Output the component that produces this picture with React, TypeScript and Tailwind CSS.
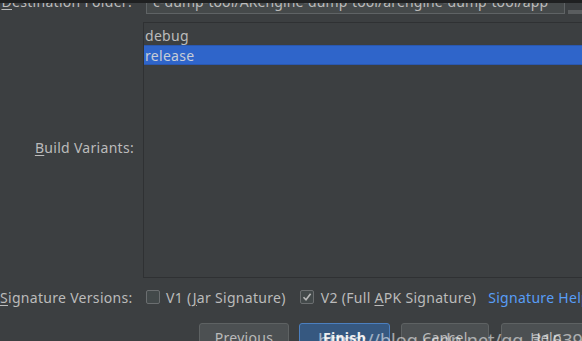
import React from 'react';

const Mn: React.FC<{ c: string }> = ({ c }) => <span className="underline underline-offset-2">{c}</span>;

const Box: React.FC<{ checked?: boolean }> = ({ checked }) => (
  <span className="w-[14px] h-[14px] rounded-[2px] border border-[#6b6e70] bg-[#43494a] flex items-center justify-center shrink-0">
    {checked && (
      <svg width="10" height="10" viewBox="0 0 10 10">
        <path d="M1.5 5.2 L4 7.8 L8.6 1.8" fill="none" stroke="#b8b8b8" strokeWidth="1.6" />
      </svg>
    )}
  </span>
);

const Btn: React.FC<{ label: string; primary?: boolean; className?: string }> = ({ label, primary, className }) => (
  <div
    className={
      'h-[30px] rounded-[3px] border flex items-center justify-center pb-[2px] shrink-0 ' +
      (primary
        ? 'border-[#4b7fbf] bg-[#365880] text-[#eeeeee] font-bold '
        : 'border-[#5e6263] bg-[#4c5052] text-[#bbbbbb] ') +
      (className ?? '')
    }
  >
    {label}
  </div>
);

const App: React.FC = () => {
  return (
    <div
      className="relative w-[582px] h-[341px] overflow-hidden bg-[#3c3f41] text-[#bbbbbb] text-[14px] tracking-[0.3px]"
      style={{ fontFamily: '"Noto Sans", "DejaVu Sans", sans-serif' }}
    >
      {/* destination folder row, clipped at the top */}
      <div className="flex items-center mt-[-12px] h-[26px]">
        <div className="w-[146px] shrink-0 text-right pr-[14px] whitespace-nowrap overflow-hidden">
          <Mn c="D" />estination Folder:
        </div>
        <div className="flex-1 h-[26px] border border-[#5f6365] bg-[#45494a] flex items-center pl-[6px] whitespace-nowrap overflow-hidden tracking-[0.1px]">
          c-dump-tool/ARengine-dump-tool/arengine-dump-tool/app
        </div>
        <div className="w-[14px] h-[4px] ml-[3px] mt-[22px] bg-[#5a5d5f] shrink-0" />
      </div>

      {/* build variants */}
      <div className="flex mt-[8px] h-[256px]">
        <div className="w-[143px] shrink-0 flex items-center justify-end pr-[9px] pb-[5px]">
          <span>
            <Mn c="B" />uild Variants:
          </span>
        </div>
        <div className="flex-1 border-l border-t border-b border-[#2f3133] pt-[2px]">
          <div className="h-[20px] flex items-center pl-[1px]">debug</div>
          <div className="h-[20px] flex items-center pl-[1px] bg-[#2f65ca] border-y border-[#2a58b0] text-[#c8cdd6]">
            release
          </div>
        </div>
      </div>

      {/* signature versions */}
      <div className="flex items-center mt-[9px] h-[20px] whitespace-nowrap">
        <div className="w-[146px] shrink-0 text-right pr-[15px]">
          <Mn c="S" />ignature Versions:
        </div>
        <Box />
        <span className="ml-[6px]">
          V1 (<Mn c="J" />ar Signature)
        </span>
        <span className="ml-[14px]">
          <Box checked />
        </span>
        <span className="ml-[7px]">
          V2 (Full <Mn c="A" />PK Signature)
        </span>
        <span className="ml-[12px] text-[#589df6]">Signature Help</span>
      </div>

      {/* buttons */}
      <div className="flex mt-[16px] pl-[199px] gap-[10px] whitespace-nowrap">
        <Btn label="Previous" className="w-[90px]" />
        <Btn label="Finish" primary className="w-[91px]" />
        <Btn label="Cancel" className="w-[88px] ml-[1px]" />
        <Btn label="Help" className="w-[90px] ml-[2px]" />
      </div>

      {/* watermark */}
      <div
        className="absolute left-[318px] top-[327px] text-[18px] tracking-normal text-white/55 whitespace-nowrap pointer-events-none"
        style={{ fontFamily: '"Noto Sans", sans-serif' }}
      >
        https://blog.csdn.net/qq_31639535
      </div>

      {/* dark strip at the very top */}
      <div className="absolute top-0 left-0 right-0 h-[3px] bg-[#1f2021]" />
    </div>
  );
};

export default App;
